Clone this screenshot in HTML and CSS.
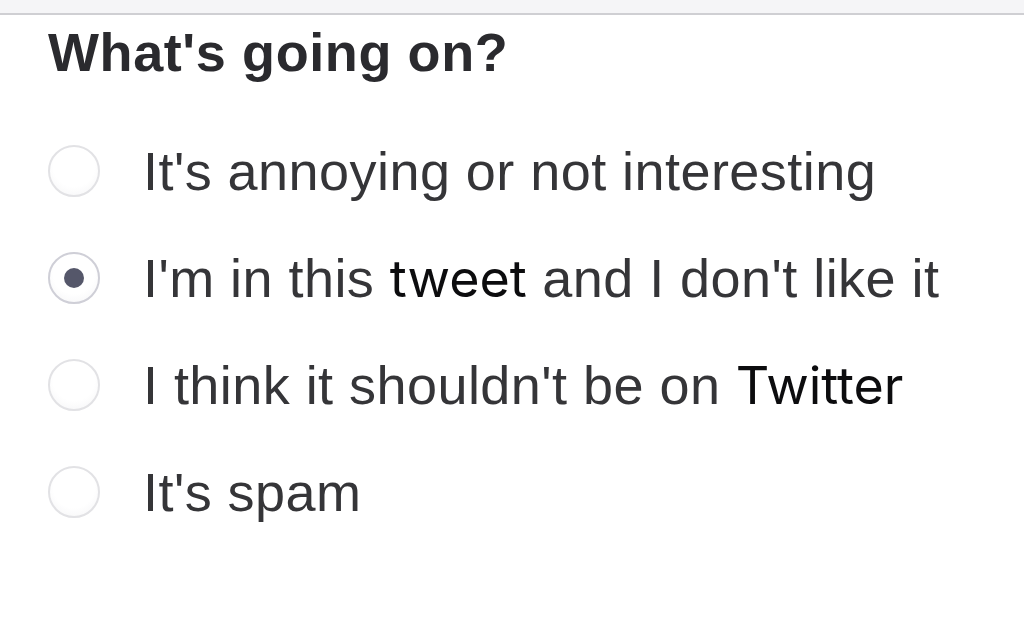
FILE: index.html
```html
<!DOCTYPE html>
<html lang="en">
<head>
<meta charset="utf-8">
<title>What's going on?</title>
<link rel="stylesheet" href="styles.css">
</head>
<body>
<div class="topbar"></div>
<main class="panel">
  <h1 class="title">What's going on?</h1>
  <div class="options">
    <label class="option">
      <span class="radio"></span>
      <span class="label">It's annoying or not interesting</span>
    </label>
    <label class="option">
      <span class="radio checked"></span>
      <span class="label">I'm in this <span class="edit">tweet</span> and I don't like it</span>
    </label>
    <label class="option">
      <span class="radio"></span>
      <span class="label">I think it shouldn't be on <span class="edit">Twitter</span></span>
    </label>
    <label class="option">
      <span class="radio"></span>
      <span class="label">It's spam</span>
    </label>
  </div>
</main>
</body>
</html>
```

FILE: styles.css
```css
html, body {
  margin: 0;
  padding: 0;
  background: #ffffff;
}

body {
  width: 1024px;
  height: 640px;
  overflow: hidden;
  font-family: "Liberation Sans", Arial, sans-serif;
  color: #363638;
}

.topbar {
  height: 13px;
  background: #f5f5f7;
  border-bottom: 2px solid #cfcfd3;
}

.panel {
  padding: 10px 0 0 48px;
}

.title {
  margin: 0;
  font-size: 54px;
  line-height: 54px;
  font-weight: 700;
  letter-spacing: 0.6px;
  color: #2a2a2e;
}

.options {
  display: flex;
  flex-direction: column;
  gap: 53px;
  margin-top: 65px;
}

.option {
  display: flex;
  align-items: center;
  height: 54px;
}

.radio {
  flex: none;
  box-sizing: border-box;
  width: 52px;
  height: 52px;
  border-radius: 50%;
  border: 2px solid #e2e2e5;
  background: radial-gradient(circle at 50% 40%, #ffffff 55%, #f3f3f5 100%);
  display: flex;
  align-items: center;
  justify-content: center;
}

.radio.checked {
  border-color: #cfcfd7;
}

.radio.checked::after {
  content: "";
  width: 20px;
  height: 20px;
  border-radius: 50%;
  background: #55576a;
}

.label {
  margin-left: 43px;
  font-size: 54px;
  line-height: 54px;
  letter-spacing: 0.45px;
  white-space: nowrap;
  color: #353538;
}

.edit {
  font-family: Inter, "Noto Sans", sans-serif;
  font-size: 52px;
  letter-spacing: 0;
  color: #0c0c0e;
}
```
